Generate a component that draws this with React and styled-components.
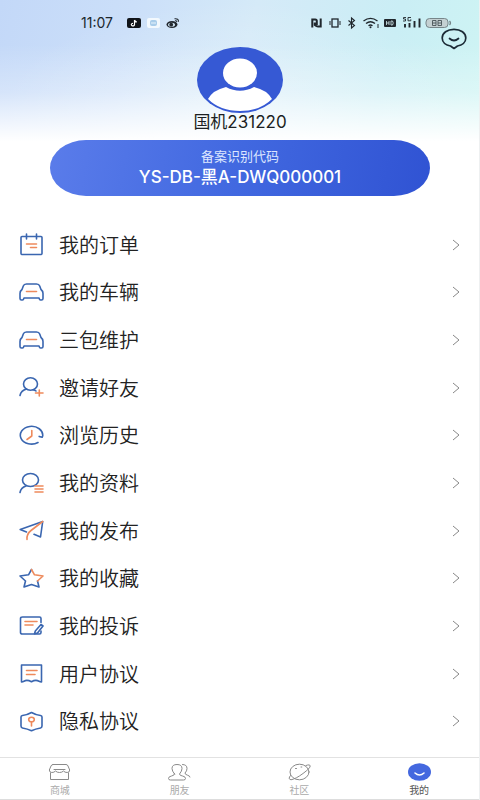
import { useState } from "react";
import styled, { createGlobalStyle } from "styled-components";

const BLUE = "#3a66b0";
const ORANGE = "#ee8a5c";

const menuItems = [
  { id: "orders", label: "我的订单", icon: "calendar" },
  { id: "cars", label: "我的车辆", icon: "car" },
  { id: "warranty", label: "三包维护", icon: "car" },
  { id: "invite", label: "邀请好友", icon: "userPlus" },
  { id: "history", label: "浏览历史", icon: "clock" },
  { id: "profile", label: "我的资料", icon: "userLines" },
  { id: "posts", label: "我的发布", icon: "plane" },
  { id: "favorites", label: "我的收藏", icon: "star" },
  { id: "complaints", label: "我的投诉", icon: "note" },
  { id: "terms", label: "用户协议", icon: "banner" },
  { id: "privacy", label: "隐私协议", icon: "shield" },
];

const tabs = [
  { id: "mall", label: "商城" },
  { id: "friends", label: "朋友" },
  { id: "community", label: "社区" },
  { id: "mine", label: "我的" },
];

const menuIcons = {
  calendar: (
    <>
      <path d="M3 3.500h19q1 0 1 1v16q0 1-1 1H3q-1 0-1-1v-16q0-1 1-1zM7.500 1v5M17.500 1v5" />
      <path d="M7.500 11h10M11.500 14.500h6" stroke={ORANGE} />
    </>
  ),
  car: (
    <>
      <path d="M7.500 3h10q2.500 0 3.200 2l1.300 3.500q2 1.500 2 4v5q0 1.500-1.500 1.500h-1q-1 0-1.500-2H5q-.5 2-1.500 2h-1Q1 19 1 17.500v-5q0-2.500 2-4L4.300 5q.7-2 3.200-2z" />
      <path d="M7.500 10.500h10" stroke={ORANGE} />
    </>
  ),
  userPlus: (
    <>
      <ellipse cx="11.500" cy="8" rx="7" ry="6.200" />
      <path d="M1 19.500q1-5 6.500-6.500M14 13.800q2 .3 3 1.200" />
      <path d="M16.500 17h7.500M20.300 14v6" stroke={ORANGE} />
    </>
  ),
  clock: (
    <>
      <path d="M19 18.500A11.200 8.900 0 1 1 23.700 12l-.5 1.200-3-.8" />
      <path d="M12.800 6.500v5.500l-4.800 3.500" stroke={ORANGE} />
    </>
  ),
  userLines: (
    <>
      <ellipse cx="11.500" cy="8" rx="8" ry="6.500" />
      <path d="M1 20.500q1-5 6-6.500" />
      <path d="M16 14h8M16 17h8M16 20h8" stroke={ORANGE} />
    </>
  ),
  plane: (
    <>
      <path d="M7.500 13L1.200 10.500 23.700 2.500 21.500 18l-6.500-2.700" />
      <path d="M23.700 2.500L12 11.500q-4.500 3.500-4 9" stroke={ORANGE} />
    </>
  ),
  star: (
    <>
      <path d="M12.500 2.500L9.500 7.800 1 9l5.500 5-1.500 6 7.500-2.500 7.500 2.500-1.500-6" />
      <path d="M12.500 2.500L15.500 7.800 24 9l-5.500 5" stroke={ORANGE} />
    </>
  ),
  note: (
    <>
      <path d="M22 8.500V4.500Q22 3 20.500 3h-17Q1.500 3 1.500 4.500v14q0 1.500 2 1.500h17q1.500 0 1.500-1.500V17" />
      <path d="M22 10.500l2 1.500-5.500 7-3 .8.800-2.800z" />
      <path d="M6 7.500h12M6 11h8" stroke={ORANGE} />
    </>
  ),
  banner: (
    <>
      <path d="M2.500 3h20v17q-1.500 0-2.500-.8-3.500-1.800-7.500.6-4.500-2.400-7.500-.6-1 .8-2.500.8z" />
      <path d="M7.500 8.500h10.500M7.500 12.500h8.500" stroke={ORANGE} />
    </>
  ),
  shield: (
    <>
      <path d="M12.500 2.500q5 2.800 9 3 1.500.2 1.500 1.500v9q0 1.500-1.500 2-5 .8-9 2.800-4-2-9-2.800-1.500-.5-1.500-2V7q0-1.300 1.500-1.500 4-.2 9-3z" />
      <ellipse cx="12.500" cy="9.500" rx="2.800" ry="2.300" stroke={ORANGE} />
      <path d="M12.500 12v4" stroke={ORANGE} />
    </>
  ),
};

const tabIcons = {
  mall: (
    <>
      <path d="M5 1.500h13q1.500 0 2 1.500l1.700 4q0 2.500-2.500 2.500T15.500 8Q14 9.500 11.500 9.500T7.500 8Q6.200 9.500 3.800 9.500T1.300 7L3 3Q3.500 1.500 5 1.500zM2.500 10v6.500h18V10" />
      <path d="M6 6.500h11" />
    </>
  ),
  friends: (
    <>
      <path d="M6.500 11Q4 8 4 5.500 4 1.500 9 1.500t5 4Q14 8 11.500 11q0 1.500 3 2t3 2.500q0 1.500-2 1.500h-13q-2 0-2-1.500 0-2 3-2.500t3-2z" />
      <path d="M14.500 1.500q4.500 0 4.500 4 0 2.500-2 4.500 0 1.500 2.500 2.200t2.500 1.800" />
    </>
  ),
  community: (
    <>
      <ellipse cx="11.500" cy="9" rx="9.500" ry="7.800" />
      <path d="M18 2.500q4-1.500 4.200.5T15 10.500 3 16.800Q-.5 16 2.500 12.500" />
      <path d="M7.500 5.500h1M13 4h.8" />
    </>
  ),
  mine: (
    <>
      <ellipse cx="11.500" cy="9" rx="11.500" ry="8.800" fill="#4468df" stroke="none" />
      <path d="M7 10q4.500 4 9 0" stroke="#fff" strokeWidth="1.600" />
    </>
  ),
};

const StatusLeftIcons = () => (
  <svg width="54" height="12" viewBox="0 0 54 12" aria-hidden="true">
    <rect width="14" height="10" y="1" rx="2" fill="#101419" />
    <path d="M7.500 3v4.500a1.600 1.300 0 1 1-1.500-1.200M7.500 3q.4 1.800 2.300 1.900" fill="none" stroke="#fff" strokeWidth="1.200" />
    <rect x="20" y="1" width="13" height="10" rx="2" fill="#f3f9fe" />
    <rect x="23" y="3" width="7" height="6" rx="2" fill="#a9cdea" />
    <path d="M24 6h5" stroke="#e7f3fc" />
    <ellipse cx="45" cy="7.500" rx="5.500" ry="3.500" fill="#22282f" />
    <ellipse cx="44.500" cy="7.700" rx="3.500" ry="2" fill="#cfe3f3" />
    <circle cx="44.200" cy="7.700" r="1.900" fill="#22282f" />
    <path d="M47.500 1.800q4.200-.6 4 3M48 3.700q1.800-.2 1.800 1.300" fill="none" stroke="#22282f" strokeWidth="1.100" />
  </svg>
);

const StatusRightIcons = () => (
  <svg width="142" height="14" viewBox="0 0 142 14" fill="none" stroke="#20272d" aria-hidden="true">
    <path d="M2.300 11.500V3.500h3q1.500 0 1.500 1.500v4M10.700 2.500v8H8q-1.500 0-3.200-1.500V6.500" strokeWidth="2" />
    <rect x="22" y="3" width="6" height="8" strokeWidth="1.300" />
    <path d="M20 5v4M30 5v4" />
    <path d="M38.500 4.500l6 5-3 2.500V2l3 2.500-6 5" strokeWidth="1.100" />
    <path d="M53.500 5q7-5.200 14 0M56 7.500q4.500-3.400 9 0M58.500 9.700q2-1.400 4 0" strokeWidth="1.400" />
    <circle cx="60.500" cy="11.300" r="1" fill="#20272d" stroke="none" />
    <path d="M68 8v4" />
    <rect x="74" y="3" width="12" height="8" rx="1" fill="#20272d" stroke="none" />
    <path d="M76.500 5v4M79 5v4M76.500 7H79M81 5v4h1.500q1.500-2 0-4z" stroke="#d8f1f5" strokeWidth=".8" />
    <path d="M96 1.500h-2.500V3h2v2h-2.500M101 1.500h-3v3.300h2.800V3.300" strokeWidth=".9" />
    <path d="M95 8v3.500M99.500 7v4.500M104.500 5v6.500M109.500 2.500v9" strokeWidth="1.900" />
    <rect x="116" y="2.500" width="22" height="9" rx="3.500" fill="#c4d0d2" stroke="#77868a" />
    <path d="M139.500 5q2 2 0 4" stroke="#77868a" strokeWidth="1.300" />
    <path d="M122.500 4.500h3.500v5h-3.500zM122.500 7h3.500M128 4.500h3.500v5H128zM128 7h3.500" stroke="#485357" strokeWidth=".9" />
  </svg>
);

const App = () => {
  const [activeTab, setActiveTab] = useState("mine");

  return (
    <Page>
      <GlobalStyle />
      <Header>
        <StatusBar>
          <StatusGroup>
            <Time>11:07</Time>
            <StatusLeftIcons />
          </StatusGroup>
          <StatusRightIcons />
        </StatusBar>
        <ChatButton aria-label="客服">
          <svg width="26" height="22" viewBox="0 0 26 22" fill="none" stroke="#1b2a35" strokeWidth="1.700" strokeLinejoin="round">
            <path d="M13 20.500L9.500 18C4.800 17.200 1.200 14.200 1.200 10 1.200 5 6.200 1.300 13 1.300S24.800 5 24.800 10c0 4.200-3.600 7.200-8.300 8z" />
            <path d="M8.500 10.500q4.500 4 9 0" strokeLinecap="round" />
          </svg>
        </ChatButton>
        <Avatar viewBox="0 0 86 66" role="img" aria-label="头像">
          <ellipse cx="43" cy="33" rx="43" ry="33" fill="#3659d4" />
          <ellipse cx="43" cy="26" rx="17" ry="14.500" fill="#fff" />
          <path d="M29 40q14 7.500 28 0 13 3 18 12-12 12-32 12T11 52q5-9 18-12z" fill="#fff" />
        </Avatar>
        <UserName>国机231220</UserName>
        <CodeCard>
          <CodeLabel>备案识别代码</CodeLabel>
          <CodeValue>YS-DB-黑A-DWQ000001</CodeValue>
        </CodeCard>
      </Header>

      <Menu>
        {menuItems.map((item) => (
          <MenuItem key={item.id}>
            <MenuButton>
              <MenuIcon viewBox="0 0 25 23">{menuIcons[item.icon]}</MenuIcon>
              <MenuLabel>{item.label}</MenuLabel>
              <Chevron viewBox="0 0 8 12">
                <path d="M1 1l6 5-6 5" />
              </Chevron>
            </MenuButton>
          </MenuItem>
        ))}
      </Menu>

      <TabBar>
        {tabs.map((tab) => (
          <TabButton
            key={tab.id}
            $active={tab.id === activeTab}
            onClick={() => setActiveTab(tab.id)}
          >
            <TabIcon viewBox="0 0 23 18">{tabIcons[tab.id]}</TabIcon>
            {tab.label}
          </TabButton>
        ))}
      </TabBar>
    </Page>
  );
};

export default App;

// Styled Components
const GlobalStyle = createGlobalStyle`
  * {
    box-sizing: border-box;
  }
  body {
    margin: 0;
    background-color: #ffffff;
  }
  button {
    margin: 0;
    padding: 0;
    border: none;
    background: none;
    font-family: inherit;
    cursor: pointer;
  }
`;

const Page = styled.div`
  display: flex;
  flex-direction: column;
  min-height: 100vh;
  border-right: 1px solid #eef0f1;
  font-family: "Noto Sans CJK SC", sans-serif;
  color: #222222;
`;

const Header = styled.header`
  position: relative;
  display: flex;
  flex-direction: column;
  align-items: center;
  padding: 14px 49px 25px 50px;
  background:
    linear-gradient(to bottom, rgba(255, 255, 255, 0) 20%, rgba(255, 255, 255, 0.3) 42%, #ffffff 64%),
    radial-gradient(ellipse at 50% 50%, rgba(255, 255, 255, 0.3) 0%, rgba(255, 255, 255, 0) 70%),
    linear-gradient(105deg, #c3d8f8 0%, #cbdff9 25%, #d5eaf8 48%, #caeef5 75%, #cff6f3 100%);
`;

const StatusBar = styled.div`
  display: flex;
  justify-content: space-between;
  align-self: stretch;
  align-items: center;
  height: 18px;
  margin-right: -22px;
  padding-left: 31px;
`;

const StatusGroup = styled.div`
  display: flex;
  align-items: center;
  gap: 14px;
`;

const Time = styled.span`
  font-family: Inter, sans-serif;
  font-size: 14px;
  line-height: 18px;
  color: #20272d;
`;

const ChatButton = styled.button`
  position: absolute;
  top: 28px;
  right: 12px;
  height: 22px;

  svg {
    display: block;
  }
`;

const Avatar = styled.svg`
  width: 88px;
  height: 66px;
  margin-top: 15px;
`;

const UserName = styled.h1`
  margin: 0;
  font-family: Inter, "Noto Sans CJK SC", sans-serif;
  font-size: 17px;
  font-weight: 400;
  line-height: 18px;
  color: #1c1f22;
`;

const CodeCard = styled.section`
  display: flex;
  flex-direction: column;
  align-items: center;
  align-self: stretch;
  gap: 2px;
  margin-top: 9px;
  padding: 8px 0;
  border-radius: 36px / 28px;
  background: linear-gradient(100deg, #5a7cea 0%, #4168e0 50%, #3053d3 100%);
  color: #ffffff;
`;

const CodeLabel = styled.span`
  font-size: 13px;
  line-height: 16px;
  color: #dce6ff;
`;

const CodeValue = styled.strong`
  font-family: Inter, "Noto Sans CJK SC", sans-serif;
  font-size: 17px;
  font-weight: 500;
  line-height: 22px;
`;

const Menu = styled.ul`
  display: flex;
  flex: 1;
  flex-direction: column;
  margin: 0;
  padding: 0 0 12px;
  list-style: none;
`;

const MenuItem = styled.li`
  display: flex;
  flex: 1;
  min-height: 40px;
`;

const MenuButton = styled.button`
  display: flex;
  flex: 1;
  align-items: center;
  padding: 0 19px;
  color: inherit;
  text-align: left;
`;

const MenuIcon = styled.svg`
  width: 25px;
  height: 23px;
  fill: none;
  stroke: ${BLUE};
  stroke-width: 1.6;
  stroke-linecap: round;
  stroke-linejoin: round;
`;

const MenuLabel = styled.span`
  flex: 1;
  margin-left: 15px;
  font-size: 20px;
  font-weight: 350;
  line-height: 24px;
`;

const Chevron = styled.svg`
  width: 8px;
  height: 12px;
  fill: none;
  stroke: #888888;
`;

const TabBar = styled.nav`
  display: flex;
  height: 43px;
  border-top: 1px solid #e2e2e2;
  border-bottom: 1px solid #dddddd;
`;

const TabButton = styled.button`
  display: flex;
  flex: 1;
  flex-direction: column;
  align-items: center;
  gap: 2px;
  padding-top: 5px;
  font-size: 10px;
  line-height: 14px;
  color: ${({ $active }) => ($active ? "#555555" : "#aaaaaa")};
`;

const TabIcon = styled.svg`
  width: 23px;
  height: 18px;
  fill: none;
  stroke: #8a8a8a;
  stroke-linecap: round;
  stroke-linejoin: round;
`;
